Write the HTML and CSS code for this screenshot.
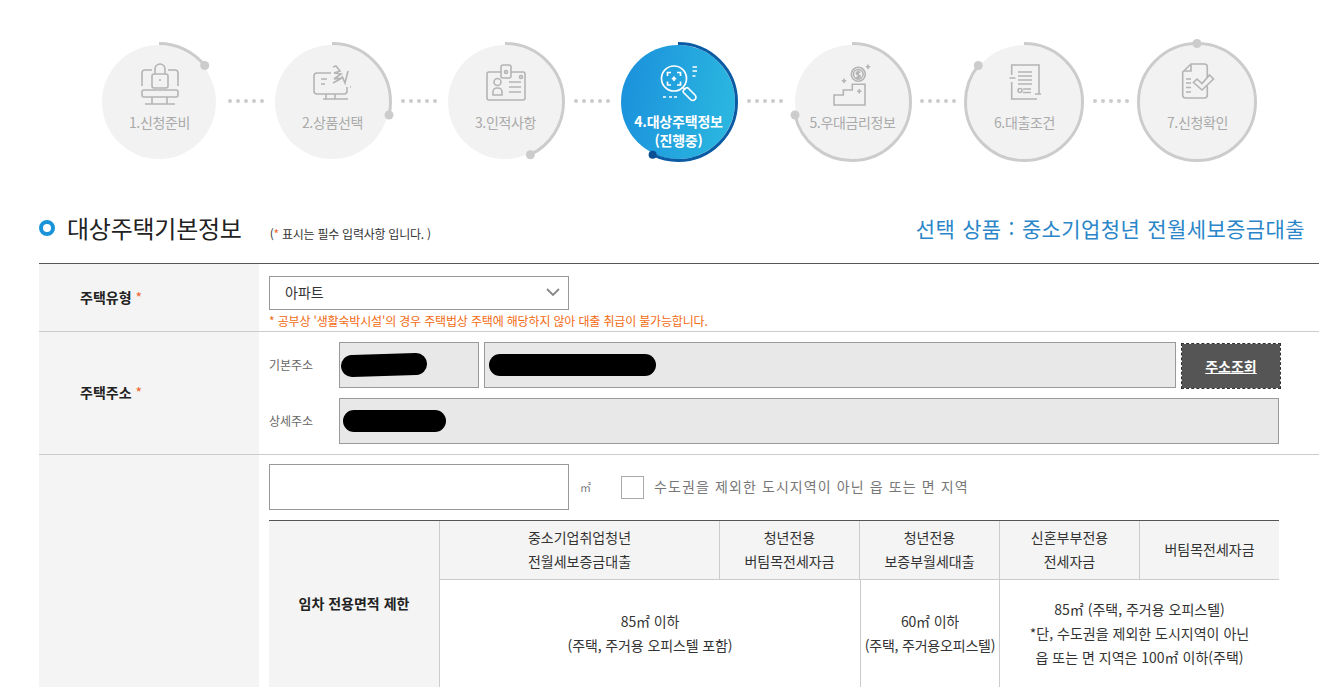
FILE: index.html
```html
<!DOCTYPE html>
<html lang="ko">
<head>
<meta charset="utf-8">
<title>대상주택기본정보</title>
<link rel="stylesheet" href="styles.css">
</head>
<body>
<div class="page">
  <ol class="steps">
    <li class="step">
      <svg class="ring" viewBox="0 0 120 120"><circle class="arc" cx="60" cy="60" r="58.5" pathLength="7" stroke-dasharray="1 7" transform="rotate(-90 60 60)"/><circle class="knob" cx="105.7" cy="23.5" r="4.5"/></svg>
      <div class="disc">
        <svg class="icon" viewBox="-1 0 60 55"><path d="M22 15h-7a3 3 0 0 0-3 3v13M38 15h7a3 3 0 0 1 3 3v13"/><rect x="22" y="19" width="16" height="14" rx="2"/><path d="M25 19v-5a5 5 0 0 1 10 0v5M30 24v2"/><rect x="12" y="35" width="36" height="7" rx="2"/><path d="M22 42v7M37 42v7M15 49h30"/></svg>
        <span class="label">1.신청준비</span>
      </div>
    </li>
    <li class="dots"><i></i><i></i><i></i><i></i><i></i></li>
    <li class="step">
      <svg class="ring" viewBox="0 0 120 120"><circle class="arc" cx="60" cy="60" r="58.5" pathLength="7" stroke-dasharray="2 7" transform="rotate(-90 60 60)"/><circle class="knob" cx="117" cy="73" r="4.5"/></svg>
      <div class="disc">
        <svg class="icon" viewBox="-3 0 60 55"><path d="M26 18H12a3 3 0 0 0-3 3v15a3 3 0 0 0 3 3h27a3 3 0 0 0 3-3v-4M21 39v5M30 39v5M18 44h25M16 24h6M16 29h4M45 32h1"/><path d="M28 12l3-1 4 5-6 2 7 1-7 5 8-1-9 5M43 16l-3 12-3-7"/></svg>
        <span class="label">2.상품선택</span>
      </div>
    </li>
    <li class="dots"><i></i><i></i><i></i><i></i><i></i></li>
    <li class="step">
      <svg class="ring" viewBox="0 0 120 120"><circle class="arc" cx="60" cy="60" r="58.5" pathLength="7" stroke-dasharray="3 7" transform="rotate(-90 60 60)"/><circle class="knob" cx="85.4" cy="112.7" r="4.5"/></svg>
      <div class="disc">
        <svg class="icon" viewBox="0 0 60 55"><path d="M26 17H14a2 2 0 0 0-2 2v24a2 2 0 0 0 2 2h34a2 2 0 0 0 2-2V19a2 2 0 0 0-2-2H36"/><rect x="26" y="10" width="10" height="13" rx="2"/><circle cx="31" cy="17" r="1.5"/><circle cx="46" cy="22" r="1.5"/><circle cx="22.5" cy="27" r="3.5"/><path d="M18 40v-3a4 4 0 0 1 4-4h1a4 4 0 0 1 4 4v3zM34 27h12M34 32h12M34 37h12"/></svg>
        <span class="label">3.인적사항</span>
      </div>
    </li>
    <li class="dots"><i></i><i></i><i></i><i></i><i></i></li>
    <li class="step is-active">
      <svg class="ring" viewBox="0 0 120 120"><circle class="arc" cx="60" cy="60" r="58.5" pathLength="7" stroke-dasharray="4 7" transform="rotate(-90 60 60)"/><circle class="knob" cx="34.6" cy="112.7" r="4"/></svg>
      <div class="disc">
        <svg class="icon" viewBox="-2 0 60 55"><circle cx="24" cy="23.5" r="12.5"/><path d="M33 32.500l2 2"/><path d="M36 33l-2.500 2.500a1.500 1.500 0 0 0 0 2l7 7a3 3 0 0 0 4.500-4.500l-7-7a1.500 1.500 0 0 0-2 0z"/><path d="M17.500 21v-3.500H21M27 17.500h3.500V21M30.500 26.500V30H27M21 30h-3.500v-3.500M24 21.500v4.500M21.800 23.700h4.400M42.500 12h4.500M42.500 16h4.500M42.500 21h3M13 42h3M19 42h3M24 42h3"/></svg>
        <span class="label">4.대상주택정보<br>(진행중)</span>
      </div>
    </li>
    <li class="dots"><i></i><i></i><i></i><i></i><i></i></li>
    <li class="step step-nudged">
      <svg class="ring" viewBox="0 0 120 120"><circle class="arc" cx="60" cy="60" r="58.500" pathLength="7" stroke-dasharray="5 7" transform="rotate(-90 60 60)"/><circle class="knob" cx="3" cy="73" r="4.500"/></svg>
      <div class="disc">
        <svg class="icon" viewBox="0 0 60 55"><path d="M12 50V40h9.300v-5h9v-5.700H43V50zM46 9.500v4.400M43.800 11.700h4.400M22 23.500v4.400M19.800 25.700h4.400M37.300 34v4.400M35.100 36.200h4.400"/><circle cx="36.300" cy="19.300" r="7"/><circle cx="36.300" cy="19.300" r="4.800"/><path d="M38.300 17.500c-1-1.200-4-1-4 .7 0 2 4 1 4 3 0 1.600-3 1.800-4 .5M36.300 15.500v7.600"/></svg>
        <span class="label">5.우대금리정보</span>
      </div>
    </li>
    <li class="dots"><i></i><i></i><i></i><i></i><i></i></li>
    <li class="step">
      <svg class="ring" viewBox="0 0 120 120"><circle class="arc" cx="60" cy="60" r="58.500" pathLength="7" stroke-dasharray="6 7" transform="rotate(-90 60 60)"/><circle class="knob" cx="14.300" cy="23.500" r="4.500"/></svg>
      <div class="disc">
        <svg class="icon" viewBox="0 0 60 55"><path d="M17.700 20V10H45v29M15.500 23h6M17.700 27v17H43M41 39h6M24 17h14M24 21h14M24 25h14M24 29h14M29 34h8M29 37.500h8"/><circle cx="26" cy="35.500" r="2"/></svg>
        <span class="label">6.대출조건</span>
      </div>
    </li>
    <li class="dots"><i></i><i></i><i></i><i></i><i></i></li>
    <li class="step">
      <svg class="ring" viewBox="0 0 120 120"><circle class="arc" cx="60" cy="60" r="58.500"/><circle class="knob" cx="60" cy="1.500" r="4.500"/></svg>
      <div class="disc">
        <svg class="icon" viewBox="0 0 60 55"><path d="M40.300 22V12a3 3 0 0 0-3-3H24l-8.300 8v23a3 3 0 0 0 3 3h18.600a3 3 0 0 0 3-3v-9M24 9.500V16h-7.500M19 24h5M19 28h5M19 32.500h5M19 37h5"/><path d="M30 24l5 4.500 7.500-8.500 4 4-11.500 11-8.500-7.500z"/></svg>
        <span class="label">7.신청확인</span>
      </div>
    </li>
  </ol>

  <div class="section-head">
    <span class="bullet"></span>
    <h2 class="section-title">대상주택기본정보</h2>
    <span class="section-note">(<em>*</em> 표시는 필수 입력사항 입니다. )</span>
    <p class="product">선택 상품 : 중소기업청년 전월세보증금대출</p>
  </div>

  <div class="form">
    <div class="row">
      <div class="row-head">주택유형 <em>*</em></div>
      <div class="row-body row-type">
        <div class="select"><span>아파트</span><svg class="chevron" viewBox="0 0 14 8"><path d="M1 1l6 6 6-6"/></svg></div>
        <p class="warning">* 공부상 '생활숙박시설'의 경우 주택법상 주택에 해당하지 않아 대출 취급이 불가능합니다.</p>
      </div>
    </div>
    <div class="row">
      <div class="row-head">주택주소 <em>*</em></div>
      <div class="row-body row-address">
        <div class="address-line">
          <span class="field-label">기본주소</span>
          <div class="readonly readonly-zip"><svg class="mark-zip" viewBox="0 0 86 24"><path d="M11 13L75 11"/></svg></div>
          <div class="readonly readonly-road"><span class="mark mark-road"></span></div>
          <a class="search-btn">주소조회</a>
        </div>
        <div class="address-line">
          <span class="field-label">상세주소</span>
          <div class="readonly readonly-detail"><span class="mark mark-detail"></span></div>
        </div>
      </div>
    </div>
    <div class="row row-last">
      <div class="row-head"></div>
      <div class="row-body row-area">
        <div class="area-line">
          <div class="area-input"></div>
          <span class="unit">㎡</span>
          <span class="checkbox"></span>
          <span class="check-label">수도권을 제외한 도시지역이 아닌 읍 또는 면 지역</span>
        </div>
        <table class="limits">
          <colgroup><col class="c-head"><col class="c-wide"><col class="c-n"><col class="c-n"><col class="c-n"><col class="c-last"></colgroup>
          <thead>
            <tr>
              <th class="limit-title" rowspan="2">임차 전용면적 제한</th>
              <th>중소기업취업청년<br>전월세보증금대출</th>
              <th>청년전용<br>버팀목전세자금</th>
              <th>청년전용<br>보증부월세대출</th>
              <th>신혼부부전용<br>전세자금</th>
              <th class="no-line">버팀목전세자금</th>
            </tr>
            <tr class="limit-body">
              <td colspan="2" class="wide">85㎡ 이하<br>(주택, 주거용 오피스텔 포함)</td>
              <td class="mid">60㎡ 이하<br>(주택, 주거용오피스텔)</td>
              <td colspan="2">85㎡ (주택, 주거용 오피스텔)<br>*단, 수도권을 제외한 도시지역이 아닌<br>읍 또는 면 지역은 100㎡ 이하(주택)</td>
            </tr>
          </thead>
        </table>
      </div>
    </div>
  </div>
</div>
</body>
</html>
```

FILE: styles.css
```css
* { box-sizing: border-box; }
html, body { margin: 0; padding: 0; height: 687px; overflow: hidden; background: #fff; }
body { font-family: "Noto Sans CJK KR", "Noto Sans", sans-serif; font-size: 14px; color: #333; }
em { font-style: normal; color: #f0642d; }
p, h2, ol { margin: 0; padding: 0; }

.page { padding: 42px 4px 0 39px; }

.steps { display: flex; list-style: none; height: 120px; margin-left: 60px; }
.step { position: relative; width: 120px; height: 120px; flex: none; display: flex; align-items: center; justify-content: center; }
.step-nudged { margin: 0 -1px 0 1px; }
.ring { position: absolute; inset: 0; width: 120px; height: 120px; overflow: visible; z-index: 1; }
.arc { fill: none; stroke: #ccc; stroke-width: 3; }
.knob { fill: #ccc; }
.disc { width: 114px; height: 114px; border-radius: 50%; background: #f2f2f2; display: flex; flex-direction: column; align-items: center; padding-top: 10px; }
.icon { width: 60px; height: 55px; flex: none; fill: none; stroke: #b4b4b4; stroke-width: 1.6; }
.label { margin-top: 2px; padding-left: 1px; line-height: 20px; color: #aaa; white-space: nowrap; text-align: center; letter-spacing: -.35px; }
.is-active .disc { background: linear-gradient(100deg, #1a8fdc 0%, #2cbae0 100%); }
.is-active .arc { stroke: #0a5ba3; }
.is-active .knob { fill: #0a4f92; }
.is-active .icon { stroke: #fff; stroke-width: 1.7; }
.is-active .label { color: #fff; font-weight: 700; line-height: 19px; letter-spacing: -.2px; }

.dots { width: 53px; flex: none; display: flex; gap: 4px; align-items: center; justify-content: center; padding-bottom: 3px; }
.dots i { width: 4px; height: 4px; border-radius: 50%; background: #ccc; }

.section-head { display: flex; align-items: center; height: 40px; margin-top: 46px; padding-right: 14px; }
.bullet { width: 16px; height: 16px; border-radius: 50%; border: 4.500px solid #1a93d9; flex: none; }
.section-title { margin-left: 12px; font-size: 24px; font-weight: 400; color: #222; line-height: 40px; letter-spacing: -.25px; }
.section-note { margin: 10px 0 0 28px; font-size: 12px; color: #333; letter-spacing: -.25px; }
.product { margin-left: auto; font-size: 21px; color: #2a86c8; letter-spacing: .4px; word-spacing: .75px; }

.form { margin-top: 15px; border-top: 1px solid #555; }
.row { display: flex; border-bottom: 1px solid #ccc; }
.row-last { border-bottom: 0; }
.row-head { width: 220px; flex: none; background: #f4f4f4; padding: 0 0 2px 41px; display: flex; align-items: center; gap: 4px; font-weight: 700; color: #222; }
.row-head em { font-weight: 400; }
.row-body { flex: 1; padding-left: 10px; min-width: 0; }

.row-type { height: 67px; padding-top: 12px; }
.select { width: 300px; height: 34px; border: 1px solid #999; display: flex; align-items: center; justify-content: space-between; padding: 0 8px 2px 15px; color: #333; }
.chevron { width: 14px; height: 8px; fill: none; stroke: #888; stroke-width: 1.8; }
.warning { margin-top: 2px; font-size: 12px; line-height: 18px; color: #f26a12; letter-spacing: -.16px; white-space: nowrap; }

.row-address { height: 122px; padding-top: 10px; display: flex; flex-direction: column; gap: 10px; }
.address-line { display: flex; height: 46px; align-items: center; }
.field-label { width: 70px; flex: none; padding-bottom: 2px; font-size: 12px; color: #666; }
.readonly { height: 46px; background: #e8e8e8; border: 1px solid #999; display: flex; align-items: center; flex: none; }
.readonly-zip { width: 140px; padding-left: 1px; }
.readonly-road { width: 692px; margin-left: 5px; padding-left: 4px; }
.readonly-detail { width: 940px; padding-left: 3px; }
.mark { display: block; height: 22px; border-radius: 11px; background: #000; }
.mark-road { width: 167px; }
.mark-detail { width: 103px; }
.mark-zip { width: 86px; height: 24px; fill: none; stroke: #000; stroke-width: 22; stroke-linecap: round; }
.search-btn { width: 100px; height: 46px; margin: 2px 0 0 5px; flex: none; display: flex; align-items: center; justify-content: center; background: #555; background-clip: padding-box; border: 1px dashed #333; color: #fff; font-weight: 700; text-decoration: underline; }

.row-area { padding-top: 9px; }
.area-line { display: flex; align-items: center; height: 46px; }
.area-input { width: 300px; height: 46px; border: 1px solid #999; flex: none; }
.unit { width: 52px; padding-left: 11px; flex: none; font-size: 11px; color: #777; }
.checkbox { width: 23px; height: 23px; border: 1px solid #aaa; flex: none; }
.check-label { margin-left: 10px; padding-bottom: 2px; color: #777; letter-spacing: 1.1px; white-space: nowrap; }

.limits { width: 1010px; margin-top: 10px; table-layout: fixed; border-collapse: separate; border-spacing: 0; border-top: 1px solid #555; }
.c-head { width: 171px; }
.c-wide { width: 280px; }
.c-n { width: 140px; }
.c-last { width: 139px; }
.limits th, .limits td { padding: 0 0 2px; text-align: center; line-height: 24px; font-weight: 400; color: #333; }
.limits th { height: 59px; background: #f4f4f4; border-right: 1px solid #ccc; border-bottom: 1px solid #ccc; }
.limits th.no-line { border-right: 0; }
.limits th.limit-title { font-weight: 700; color: #222; border-bottom: 0; padding-bottom: 4px; }
.limit-body td { height: 109px; padding-bottom: 4px; }
.limit-body td.wide { letter-spacing: -.12px; }
.limit-body td.mid { border-left: 1px solid #ccc; border-right: 1px solid #ccc; letter-spacing: -.2px; white-space: nowrap; }
```
